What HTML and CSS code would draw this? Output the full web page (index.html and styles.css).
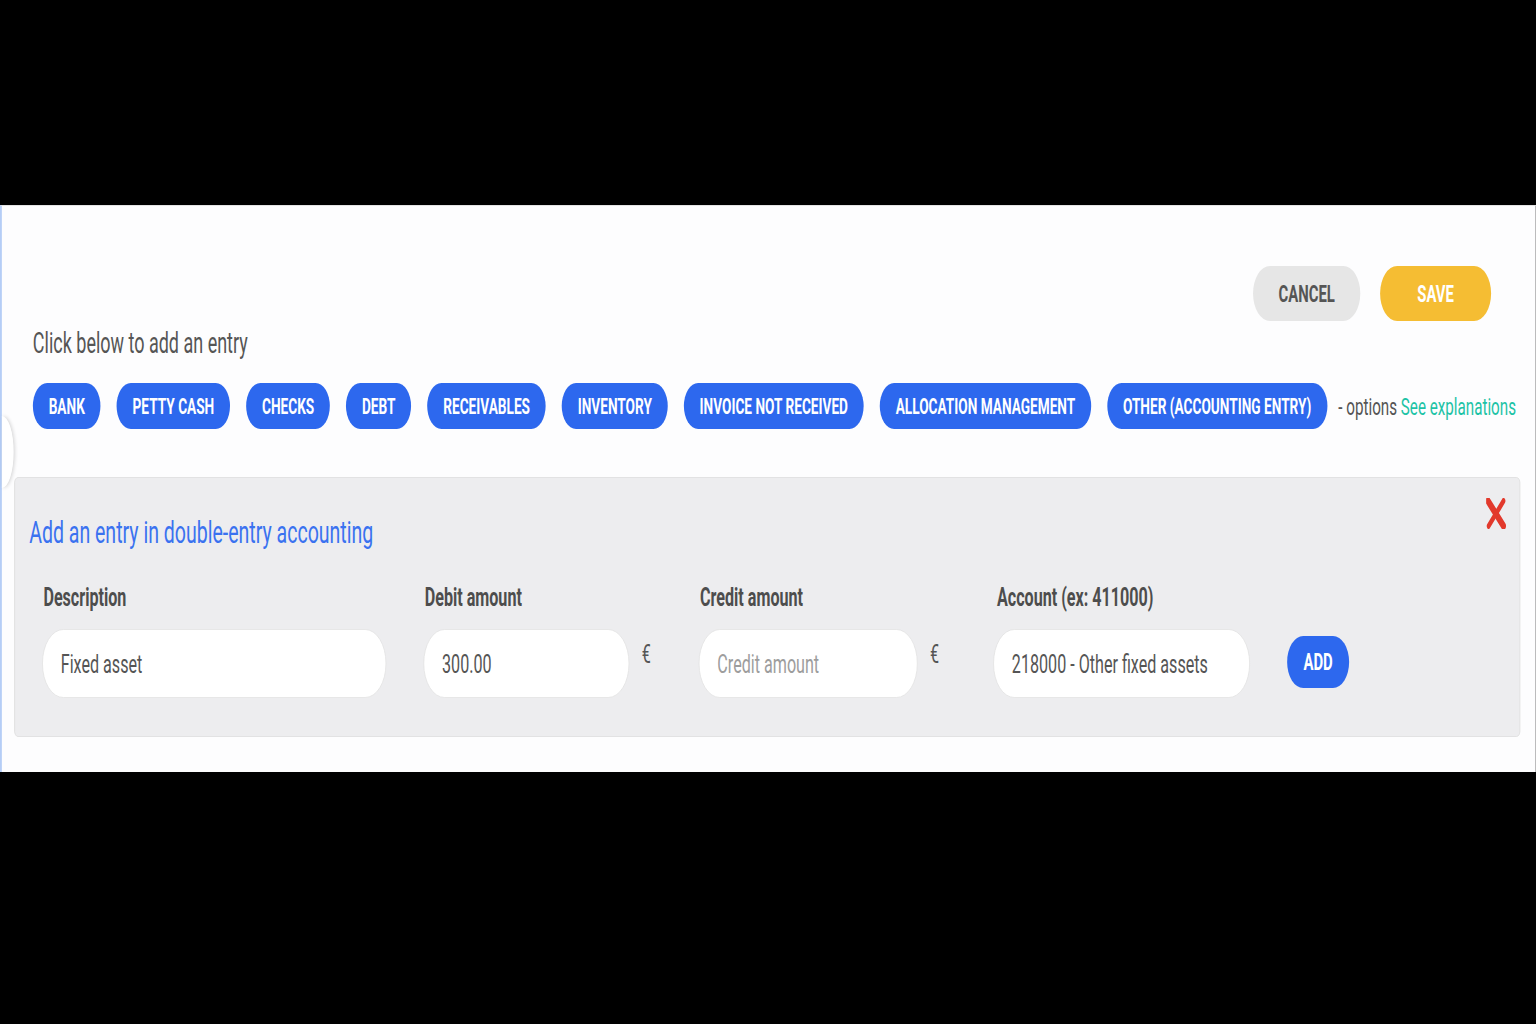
FILE: index.html
```html
<!DOCTYPE html>
<html lang="en">
<head>
  <meta charset="UTF-8" />
  <meta name="viewport" content="width=device-width, initial-scale=1.0"/>
  <title>New entry</title>
  <link rel="stylesheet" href="styles.css">
</head>
<body>

<div class="frame">
<div class="sheet">
  <div class="side-handle"></div>

  <div class="toolbar">
    <button class="btn btn-cancel">Cancel</button>
    <button class="btn btn-save">Save</button>
  </div>

  <p class="intro">Click below to add an entry</p>

  <div class="types">
    <button class="type">Bank</button>
    <button class="type">Petty cash</button>
    <button class="type">Checks</button>
    <button class="type">Debt</button>
    <button class="type">Receivables</button>
    <button class="type">Inventory</button>
    <button class="type">Invoice not received</button>
    <button class="type">Allocation management</button>
    <button class="type">Other (accounting entry)</button>
    <span class="options">- options <a href="#">See explanations</a></span>
  </div>

  <div class="entry">
    <div class="entry-head">
      <h2>Add an entry in double-entry accounting</h2>
      <button class="close" title="Close">
        <svg width="32" height="31" viewBox="0 0 32 31">
          <path d="M3 3 L28 28" stroke="#e2392c" stroke-width="8" stroke-linecap="round"/>
          <path d="M28 3 L4 28" stroke="#e2392c" stroke-width="6" stroke-linecap="round"/>
        </svg>
      </button>
    </div>

    <div class="fields">
      <div class="field">
        <label>Description</label>
        <input class="input input-desc" type="text" value="Fixed asset">
      </div>
      <div class="field">
        <label>Debit amount</label>
        <div class="input-row">
          <input class="input input-debit" type="text" value="300.00">
          <span class="currency currency-debit">€</span>
        </div>
      </div>
      <div class="field">
        <label>Credit amount</label>
        <div class="input-row">
          <input class="input input-credit" type="text" placeholder="Credit amount">
          <span class="currency currency-credit">€</span>
        </div>
      </div>
      <div class="field">
        <label class="label-account">Account (ex: 411000)</label>
        <input class="input input-account" type="text" value="218000 - Other fixed assets">
      </div>
      <button class="add-btn">Add</button>
    </div>
  </div>
</div>
</div>

</body>
</html>
```

FILE: styles.css
```css
body {
  margin: 0;
  padding: 205px 0 0;
  background: #000;
  height: 1024px;
  box-sizing: border-box;
  overflow: hidden;
  font-family: Roboto, "Liberation Sans", sans-serif;
}

.frame {
  width: 1536px;
  height: 567px;
  overflow: hidden;
}

/* the whole sheet is drawn in a narrow font: lay it out wide, then squeeze it */
.sheet {
  position: relative;
  width: 2477px;
  height: 567px;
  box-sizing: border-box;
  padding: 60px 25px 36px 20px;
  background: #fdfdfe;
  border-left: 3px solid #b5cdf6;
  border-top: 1px solid #e4e4e4;
  transform: scaleX(0.62);
  transform-origin: 0 0;
}

/* half of the round drawer tab peeking in from the left */
.side-handle {
  position: absolute;
  left: 0;
  top: 210px;
  width: 19px;
  height: 72px;
  border-radius: 0 100% 100% 0 / 0 50% 50% 0;
  background: #fff;
  box-shadow: 2px 0 5px rgba(0,0,0,0.16);
}

.toolbar {
  display: flex;
  justify-content: flex-end;
  gap: 32px;
  padding-right: 47px;
}
.btn {
  height: 55px;
  border: none;
  border-radius: 28px;
  font-family: inherit;
  font-size: 24px;
  font-weight: 700;
  text-transform: uppercase;
  cursor: pointer;
}
.btn-cancel {
  width: 173px;
  background: #e6e6e6;
  color: #555;
}
.btn-save {
  width: 179px;
  background: #f5bd33;
  color: #fff;
}

.intro {
  margin: 4px 0 0;
  padding-left: 30px;
  font-size: 29px;
  line-height: 36px;
  color: #555;
}

.types {
  display: flex;
  align-items: center;
  gap: 26px;
  margin-top: 22px;
  padding-left: 30px;
  white-space: nowrap;
}
.type {
  flex-shrink: 0;
  height: 46px;
  padding: 0 25.5px;
  border: none;
  border-radius: 23px;
  background: #2d68ee;
  color: #fff;
  font-family: inherit;
  font-size: 22px;
  font-weight: 700;
  text-transform: uppercase;
  cursor: pointer;
}
.options {
  margin-left: -8px;
  font-size: 24.5px;
  color: #555;
}
.options a {
  color: #1dc3a6;
  text-decoration: none;
}

.entry {
  margin-top: 48px;
  height: 260px;
  box-sizing: border-box;
  padding: 0 22px 0 23px;
  background: #ededef;
  border: 1px solid #dedede;
  border-radius: 6px;
}
.entry-head {
  display: flex;
  justify-content: space-between;
  align-items: flex-start;
  padding-top: 20px;
}
.entry-head h2 {
  margin: 17px 0 0;
  font-size: 31.5px;
  font-weight: 400;
  line-height: 36px;
  color: #3a72f0;
}
.close {
  padding: 0;
  border: none;
  background: none;
  cursor: pointer;
}
.close svg {
  display: block;
}

.fields {
  display: flex;
  align-items: flex-start;
  gap: 60px;
  margin: 31px 0 0 21px;
}
.field label {
  display: block;
  margin-bottom: 17px;
  padding-left: 2px;
  font-size: 26px;
  font-weight: 700;
  line-height: 30px;
  color: #4d4d4d;
}
.field .label-account {
  padding-left: 6px;
}
.input-row {
  display: flex;
  align-items: flex-start;
}
.input {
  height: 69px;
  box-sizing: border-box;
  padding: 0 29px;
  background: #fff;
  border: 1px solid #e2e2e2;
  border-radius: 34px;
  font-family: inherit;
  font-size: 26px;
  color: #555;
  outline: none;
}
.input::placeholder {
  color: #9d9d9d;
}
.input-desc { width: 555px; }
.input-debit { width: 332px; }
.input-credit { width: 353px; }
.input-account { width: 414px; }

.currency {
  box-sizing: border-box;
  padding-left: 20px;
  margin-top: 10px;
  font-size: 26px;
  line-height: 30px;
  color: #555;
}
.currency-debit { width: 52px; }
.currency-credit { width: 62px; }

.add-btn {
  width: 100px;
  height: 52px;
  margin-top: 54px;
  border: none;
  border-radius: 26px;
  background: #2d68ee;
  color: #fff;
  font-family: inherit;
  font-size: 24px;
  font-weight: 700;
  text-transform: uppercase;
  cursor: pointer;
}
```
